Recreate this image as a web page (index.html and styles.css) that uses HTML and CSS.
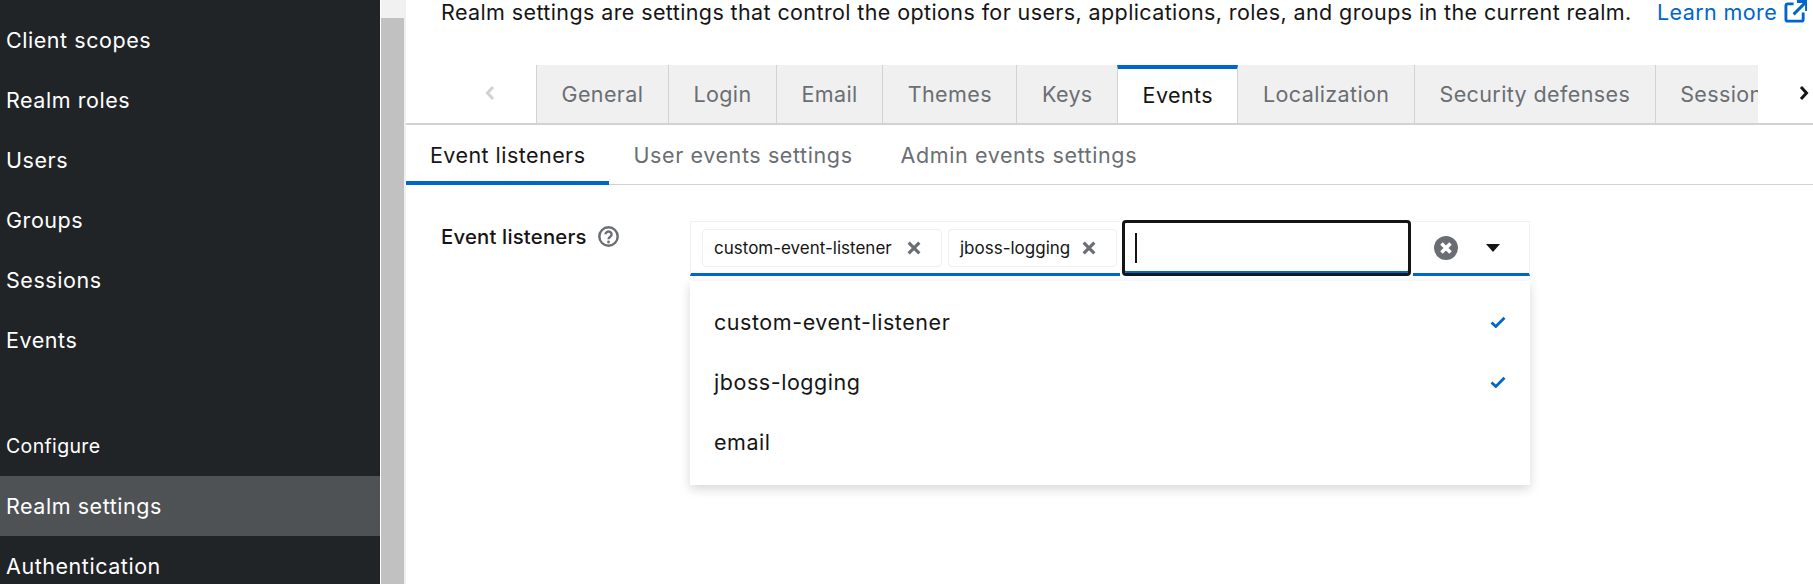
FILE: index.html
```html
<!DOCTYPE html>
<html lang="en">

<head>
    <meta charset="UTF-8">
    <title>Realm settings</title>
    <link rel="stylesheet" href="styles.css">
</head>

<body>
    <div class="page">
        <nav class="sidebar">
            <a class="nav-item">Client scopes</a>
            <a class="nav-item">Realm roles</a>
            <a class="nav-item">Users</a>
            <a class="nav-item">Groups</a>
            <a class="nav-item">Sessions</a>
            <a class="nav-item">Events</a>
            <div class="nav-title">Configure</div>
            <a class="nav-item current">Realm settings</a>
            <a class="nav-item">Authentication</a>
        </nav>
        <div class="scrollbar"><div class="thumb"></div></div>
        <main class="content">
            <p class="intro">Realm settings are settings that control the options for users, applications, roles, and groups in the current realm.
                <a class="learn">Learn more
                    <svg class="ext" viewBox="0 0 24 24" width="23" height="23"><path d="M10 4H4a2 2 0 0 0-2 2v14a2 2 0 0 0 2 2h14a2 2 0 0 0 2-2v-7" fill="none" stroke="#06c" stroke-width="3"/><path d="M10 15 22 3M13.500 1.500H23.500V11.500" fill="none" stroke="#06c" stroke-width="3"/></svg>
                </a>
            </p>

            <div class="tabs">
                <div class="tab-arrow left"><svg viewBox="0 0 10 16" width="10" height="16"><path d="M8 2 2.500 8 8 14" fill="none" stroke="#d2d2d2" stroke-width="3"/></svg></div>
                <div class="tab-list">
                    <div class="tab">General</div>
                    <div class="tab">Login</div>
                    <div class="tab">Email</div>
                    <div class="tab">Themes</div>
                    <div class="tab">Keys</div>
                    <div class="tab active">Events</div>
                    <div class="tab">Localization</div>
                    <div class="tab">Security defenses</div>
                    <div class="tab">Sessions</div>
                </div>
                <div class="tab-arrow right"><svg viewBox="0 0 10 16" width="10" height="16"><path d="M2 2 7.500 8 2 14" fill="none" stroke="#151515" stroke-width="3"/></svg></div>
            </div>

            <div class="subtabs">
                <div class="subtab active">Event listeners</div>
                <div class="subtab">User events settings</div>
                <div class="subtab">Admin events settings</div>
            </div>

            <div class="form-row">
                <label class="form-label">Event listeners
                    <svg viewBox="0 0 24 24" width="21" height="21"><circle cx="12" cy="12" r="10.500" fill="none" stroke="#6a6e73" stroke-width="2.800"/><path d="M8.500 9.500a3.500 3.200 0 1 1 5.500 2.700c-1.300.9-2 1.500-2 3" fill="none" stroke="#6a6e73" stroke-width="2.800"/><circle cx="12" cy="18.300" r="1.600" fill="#6a6e73"/></svg>
                </label>
                <div class="select">
                    <div class="chips">
                        <span class="chip first">custom-event-listener
                            <svg viewBox="0 0 12 12" width="16" height="16"><path d="M2 2l8 8M10 2l-8 8" stroke="#6a6e73" stroke-width="2.400"/></svg>
                        </span>
                        <span class="chip second">jboss-logging
                            <svg viewBox="0 0 12 12" width="16" height="16"><path d="M2 2l8 8M10 2l-8 8" stroke="#6a6e73" stroke-width="2.400"/></svg>
                        </span>
                    </div>
                    <div class="input"><span class="cursor"></span></div>
                    <div class="controls">
                        <svg viewBox="0 0 24 24" width="24" height="24"><circle cx="12" cy="12" r="12" fill="#6a6e73"/><path d="M7.500 7.500l9 9M16.500 7.500l-9 9" stroke="#fff" stroke-width="3.600"/></svg>
                        <span class="caret"></span>
                    </div>

                    <ul class="menu">
                        <li>custom-event-listener
                            <svg viewBox="0 0 16 12" width="16" height="12"><path d="M1.500 6.500 5.800 10.500 14.500 1.800" fill="none" stroke="#06c" stroke-width="2.800"/></svg>
                        </li>
                        <li>jboss-logging
                            <svg viewBox="0 0 16 12" width="16" height="12"><path d="M1.500 6.500 5.800 10.500 14.500 1.800" fill="none" stroke="#06c" stroke-width="2.800"/></svg>
                        </li>
                        <li>email</li>
                    </ul>
                </div>
            </div>
        </main>
    </div>
</body>

</html>
```

FILE: styles.css
```css
* {
    margin: 0;
    padding: 0;
    box-sizing: border-box;
}

body {
    background: #fff;
    color: #151515;
    font-family: Inter, "Liberation Sans", sans-serif;
    font-size: 21.5px;
    letter-spacing: 0.39px;
    overflow: hidden;
}

.page {
    display: flex;
    height: 584px;
    overflow: hidden;
}

/* left nav */
.sidebar {
    width: 380px;
    flex: none;
    background: #212427;
    color: #fff;
    padding-top: 10px;
    overflow: hidden;
    letter-spacing: 0.55px;
}

.nav-item {
    display: flex;
    align-items: center;
    height: 60px;
    padding-left: 6px;
}

.nav-item.current {
    background: #4f5255;
}

.nav-title {
    margin-top: 46px;
    height: 60px;
    display: flex;
    align-items: center;
    padding-left: 6px;
    font-size: 19.5px;
    letter-spacing: 0.35px;
}

.scrollbar {
    width: 23px;
    flex: none;
    margin-left: 1px;
    background: #f1f1f1;
    padding-top: 18px;
}

.thumb {
    height: 100%;
    background: #c1c1c1;
}

/* main */
.content {
    flex: 1;
    min-width: 0;
    border-left: 2px solid #f0f0f0;
}

.intro {
    height: 65px;
    padding: 0 0 0 35px;
    line-height: 22px;
    white-space: nowrap;
}

.learn {
    margin-left: 19px;
    color: #06c;
}

.ext {
    vertical-align: -3px;
}

.tabs {
    display: flex;
    height: 60px;
    border-bottom: 2px solid #d2d2d2;
}

.tab-arrow {
    display: flex;
    align-items: center;
    justify-content: center;
    flex: none;
}

.tab-arrow.left {
    width: 130px;
    padding-left: 38px;
    padding-bottom: 2px;
}

.tab-arrow.right {
    width: 55px;
    padding-left: 36px;
    padding-bottom: 2px;
}

.tab-list {
    flex: 1;
    min-width: 0;
    display: flex;
    overflow: hidden;
}

.tab {
    flex: none;
    display: flex;
    align-items: center;
    height: 58px;
    padding: 0 24.5px;
    background: #f0f0f0;
    color: #6a6e73;
    border-left: 1px solid #d2d2d2;
}

.tab.active {
    height: 60px;
    padding-bottom: 4px;
    background: #fff;
    color: #151515;
    border-top: 4px solid #06c;
    border-right: 1px solid #d2d2d2;
}

.tab.active + .tab {
    border-left: 0;
}

.subtabs {
    display: flex;
    height: 60px;
    border-bottom: 1px solid #d2d2d2;
}

.subtab {
    display: flex;
    align-items: center;
    height: 60px;
    padding: 0 24px;
    color: #6a6e73;
    letter-spacing: 0.6px;
}

.subtab.active {
    color: #151515;
    border-bottom: 4px solid #06c;
    padding-top: 4px;
    letter-spacing: 0.45px;
}

.form-row {
    display: flex;
    padding: 35px 0 0 35px;
}

.form-label {
    width: 249px;
    flex: none;
    display: flex;
    gap: 11px;
    align-items: center;
    height: 32px;
    font-weight: 500;
    font-size: 20.3px;
    letter-spacing: 0.2px;
}

.select {
    position: relative;
    display: flex;
    width: 840px;
    height: 55px;
    margin-top: 1px;
}

.chips {
    display: flex;
    gap: 6px;
    width: 430px;
    height: 55px;
    padding: 7px 0 0 11px;
    border: 1px solid #f0f0f0;
    border-bottom: 3px solid #06c;
    border-right: 0;
}

.chip {
    display: flex;
    align-items: center;
    justify-content: space-between;
    height: 38px;
    padding: 0 19px 0 11px;
    border: 1px solid #f0f0f0;
    border-radius: 4px;
    font-size: 17px;
    letter-spacing: 0;
    color: #151515;
}

.chip.first {
    width: 240px;
}

.chip.second {
    width: 169px;
}

.input {
    width: 289px;
    height: 56px;
    margin: -1px 2px 0 2px;
    border: 3px solid #151515;
    border-radius: 4px;
    box-shadow: inset 0 -2px 0 #06c;
    padding: 10px 0 0 10px;
    flex: none;
}

.cursor {
    display: block;
    width: 2px;
    height: 30px;
    background: #151515;
}

.controls {
    flex: 1;
    display: flex;
    align-items: center;
    gap: 28px;
    padding: 0 0 0 21px;
    border: 1px solid #f0f0f0;
    border-bottom: 3px solid #06c;
    border-left: 0;
}

.caret {
    width: 0;
    height: 0;
    border-left: 7px solid transparent;
    border-right: 7px solid transparent;
    border-top: 8px solid #151515;
}

.menu {
    position: absolute;
    top: 60px;
    left: 0;
    width: 840px;
    height: 204px;
    padding-top: 11px;
    background: #fff;
    list-style: none;
    letter-spacing: 0.55px;
    box-shadow: 0 4px 10px rgba(3, 3, 3, 0.16);
}

.menu li {
    display: flex;
    align-items: center;
    justify-content: space-between;
    height: 60px;
    padding: 0 24px;
}
```
